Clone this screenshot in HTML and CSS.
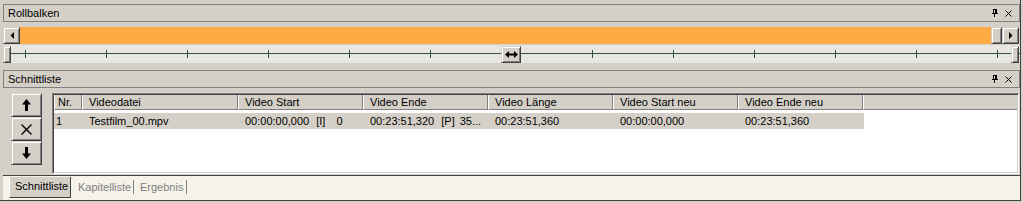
FILE: index.html
```html
<!DOCTYPE html>
<html>
<head>
<meta charset="utf-8">
<title>Rollbalken / Schnittliste</title>
<link rel="stylesheet" href="styles.css">
</head>
<body>
<div class="app">
  <div class="pane-title">
    <span class="title-text">Rollbalken</span>
    <span class="tools">
      <svg class="pin" width="6" height="8" viewBox="0 0 6 8" shape-rendering="crispEdges"><rect x="1" y="0" width="4" height="1"/><rect x="1" y="0" width="1" height="4"/><rect x="3" y="0" width="2" height="4"/><rect x="0" y="4" width="6" height="1"/><rect x="2" y="5" width="1" height="3"/></svg>
      <svg class="close" width="7" height="7" viewBox="0 0 7 7"><path d="M0.5 0.5 L6.5 6.5 M6.5 0.5 L0.5 6.5" stroke="#000" stroke-width="1" fill="none"/></svg>
    </span>
  </div>

  <div class="hscroll">
    <div class="raised arrow-btn"><svg width="4" height="7" viewBox="0 0 4 7"><polygon points="4,0 4,7 0.5,3.5" fill="#000"/></svg></div>
    <div class="track"></div>
    <div class="raised thumb"></div>
    <div class="raised arrow-btn"><svg width="4" height="7" viewBox="0 0 4 7"><polygon points="0,0 0,7 3.5,3.5" fill="#000"/></svg></div>
  </div>

  <div class="slider">
    <div class="raised sthumb s-left"></div>
    <div class="raised sthumb s-mid"><svg width="13" height="7" viewBox="0 0 13 7"><polygon points="0,3.5 4,0 4,2.5 9,2.5 9,0 13,3.5 9,7 9,4.5 4,4.5 4,7" fill="#000"/></svg></div>
    <div class="raised sthumb s-right"></div>
  </div>

  <div class="pane-title second">
    <span class="title-text">Schnittliste</span>
    <span class="tools">
      <svg class="pin" width="6" height="8" viewBox="0 0 6 8" shape-rendering="crispEdges"><rect x="1" y="0" width="4" height="1"/><rect x="1" y="0" width="1" height="4"/><rect x="3" y="0" width="2" height="4"/><rect x="0" y="4" width="6" height="1"/><rect x="2" y="5" width="1" height="3"/></svg>
      <svg class="close" width="7" height="7" viewBox="0 0 7 7"><path d="M0.5 0.5 L6.5 6.5 M6.5 0.5 L0.5 6.5" stroke="#000" stroke-width="1" fill="none"/></svg>
    </span>
  </div>

  <div class="cutlist">
    <div class="cmds">
      <div class="raised cmd"><svg width="9" height="12" viewBox="0 0 9 12"><polygon points="4.5,0 9,5.5 6,5.5 6,12 3,12 3,5.5 0,5.5" fill="#000"/></svg></div>
      <div class="raised cmd"><svg width="11" height="11" viewBox="0 0 11 11"><path d="M0.5 0.5 L10.5 10.5 M10.5 0.5 L0.5 10.5" stroke="#000" stroke-width="1.4" fill="none"/></svg></div>
      <div class="raised cmd"><svg width="9" height="12" viewBox="0 0 9 12"><polygon points="4.5,12 9,6.5 6,6.5 6,0 3,0 3,6.5 0,6.5" fill="#000"/></svg></div>
    </div>
    <div class="grid">
      <div class="hdr">
        <div class="h c-nr">Nr.</div>
        <div class="h c-file">Videodatei</div>
        <div class="h c-w">Video Start</div>
        <div class="h c-w">Video Ende</div>
        <div class="h c-w">Video Länge</div>
        <div class="h c-w">Video Start neu</div>
        <div class="h c-w">Video Ende neu</div>
        <div class="h c-fill"></div>
      </div>
      <div class="data">
        <div class="d c-nr">1</div>
        <div class="d c-file">Testfilm_00.mpv</div>
        <div class="d c-w">00:00:00,000<span class="fr">[I]</span><span class="fn">0</span></div>
        <div class="d c-w">00:23:51,320<span class="fr">[P]</span><span class="fn2">35...</span></div>
        <div class="d c-w">00:23:51,360</div>
        <div class="d c-w">00:00:00,000</div>
        <div class="d c-w">00:23:51,360</div>
      </div>
    </div>
  </div>

  <div class="tabs">
    <div class="tab sel">Schnittliste</div>
    <div class="tab plain t-kap">Kapitelliste</div>
    <div class="tab plain t-erg">Ergebnis</div>
  </div>
</div>
</body>
</html>
```
FILE: styles.css
```css
* { box-sizing: border-box; }

body {
  margin: 0;
  background: #d4d0c8;
  font-family: "Liberation Sans", Arial, sans-serif;
  font-size: 11px;
  color: #000;
}

.app {
  width: 1021px;
  height: 201px;
  padding: 4px 0 0 3px;
  border-right: 1px solid #404040;
  border-bottom: 1px solid #404040;
  display: flex;
  flex-direction: column;
}

.pane-title {
  flex: none;
  height: 18px;
  border: 1px solid #808080;
  display: flex;
  align-items: flex-start;
  justify-content: space-between;
  padding: 0 7px 0 4px;
}
.pane-title.second { margin-top: 7px; }
.title-text { line-height: 16px; }
.tools { display: flex; align-items: flex-start; gap: 7px; }
.pin { margin-top: 4px; fill: #000; }
.close { margin-top: 5px; }

.raised {
  background: #d4d0c8;
  border: 1px solid;
  border-color: #d4d0c8 #404040 #404040 #d4d0c8;
  box-shadow: inset 1px 1px #fff, inset -1px -1px #808080;
}

.hscroll {
  flex: none;
  display: flex;
  height: 17px;
  margin-top: 5px;
  margin-right: 1px;
}
.arrow-btn {
  width: 17px;
  display: flex;
  align-items: center;
  justify-content: center;
}
.track { flex: 1; background: #ffab45; }
.thumb { width: 11px; }

.slider {
  flex: none;
  position: relative;
  height: 18px;
  margin-top: 1px;
  background-color: #e8e6e1;
  background-image:
    linear-gradient(#2f4f4f, #2f4f4f),
    repeating-linear-gradient(to right, #2f4f4f 0 1px, transparent 1px 81px);
  background-size: 100% 1px, 100% 8px;
  background-position: 0 8px, 22px 5px;
  background-repeat: no-repeat;
}
.sthumb { position: absolute; top: 1px; height: 17px; }
.s-left { left: 0; width: 8px; }
.s-right { right: 1px; width: 8px; }
.s-mid {
  left: 498px;
  width: 20px;
  display: flex;
  align-items: center;
  justify-content: center;
}

.cutlist {
  flex: none;
  display: flex;
  height: 81px;
  margin-top: 5px;
}
.cmds {
  margin-left: 8px;
  width: 31px;
  display: flex;
  flex-direction: column;
}
.cmd {
  height: 24px;
  display: flex;
  align-items: center;
  justify-content: center;
}

.grid {
  flex: 1;
  margin-left: 10px;
  margin-right: 1px;
  background: #fff;
  border: 1px solid;
  border-color: #808080 #fff #fff #808080;
  box-shadow: inset 1px 1px #404040, inset -1px -1px #d4d0c8;
  padding: 1px;
  overflow: hidden;
}

.hdr {
  display: flex;
  height: 15px;
  background: #d4d0c8;
}
.h {
  height: 15px;
  border-left: 1px solid #fff;
  border-right: 1px solid #808080;
  border-bottom: 1px solid #808080;
  padding-left: 6px;
  padding-top: 1px;
  line-height: 13px;
  white-space: nowrap;
  overflow: hidden;
}
.c-nr { width: 28px; flex: none; }
.h.c-nr { padding-left: 3px; }
.c-file { width: 156px; flex: none; }
.c-w { width: 125px; flex: none; }
.h.c-fill { flex: 1; border-right: none; }

.data {
  display: flex;
  width: 810px;
  height: 16px;
  margin-top: 3px;
  background: #d4d0c8;
}
.d {
  line-height: 16px;
  padding-left: 7px;
  white-space: nowrap;
  overflow: hidden;
}
.d.c-nr { padding-left: 2px; }
.fr { margin-left: 7px; }
.fn { margin-left: 11px; }
.fn2 { margin-left: 5px; }

.tabs {
  flex: none;
  display: flex;
  align-items: flex-start;
  height: 25px;
  margin-top: 1px;
  border-top: 1px solid #404040;
  background: #f5f2e9;
  padding-left: 6px;
}
.tab { white-space: nowrap; }
.tab.sel {
  margin-top: 1px;
  width: 62px;
  height: 21px;
  background: #d4d0c8;
  border-left: 1px solid #fff;
  border-right: 1px solid #404040;
  border-bottom: 1px solid #404040;
  padding-left: 5px;
  line-height: 19px;
}
.tab.plain {
  margin-top: 4px;
  height: 14px;
  line-height: 14px;
  color: #808080;
  border-right: 1px solid #808080;
}
.t-kap { width: 63px; padding-left: 7px; }
.t-erg { width: 53px; padding-left: 6px; }
```
